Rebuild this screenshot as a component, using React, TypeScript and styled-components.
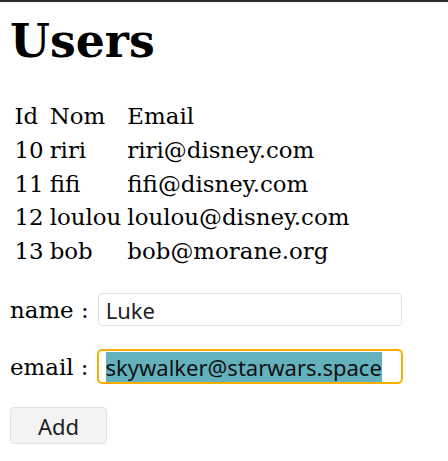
import React, { useEffect, useRef } from "react";
import styled, { createGlobalStyle } from "styled-components";

const Global = createGlobalStyle`
  html { border-top: 2px solid #2e2e2e; }
  body {
    margin: 0 10px;
    font-family: "DejaVu Serif", serif;
    font-size: 22.9px;
    color: #000;
    background: #fff;
  }
`;

const Title = styled.h1`
  font-size: 45.8px;
  font-weight: bold;
  margin: 12px 0 30px;
`;

const Table = styled.table`
  border-spacing: 3px;
  border-collapse: separate;
`;

const Th = styled.th`
  font-weight: normal;
  text-align: left;
  padding: 2.35px 1.5px;
`;

const Td = styled.td`
  padding: 2.35px 1.5px;
`;

const Form = styled.form`
  display: flex;
  flex-direction: column;
  align-items: flex-start;
  gap: 24px;
  margin-top: 24px;
`;

const Field = styled.label`
  display: flex;
  align-items: center;
  gap: 9px;
`;

const Input = styled.input`
  box-sizing: border-box;
  width: 304px;
  height: 33px;
  padding: 0 7px;
  border: 1px solid #e2e2e2;
  border-radius: 4px;
  font-family: "Noto Sans", sans-serif;
  font-size: 22px;
  color: #222;
  background: #fff;
  outline: none;
  &:focus {
    border-color: #f7ae00;
    box-shadow: 0 0 0 1px #f7ae00;
  }
  &::selection {
    background: #63b1bd;
    color: #111;
  }
`;

const Button = styled.button`
  box-sizing: border-box;
  width: 97px;
  height: 37px;
  border: 1px solid #e0e0e0;
  border-radius: 4px;
  background: #f4f4f4;
  font-family: "Noto Sans", sans-serif;
  font-size: 22px;
  color: #222;
`;

const users = [
  { id: 10, nom: "riri", email: "riri@disney.com" },
  { id: 11, nom: "fifi", email: "fifi@disney.com" },
  { id: 12, nom: "loulou", email: "loulou@disney.com" },
  { id: 13, nom: "bob", email: "bob@morane.org" },
];

export default function App() {
  const emailRef = useRef<HTMLInputElement>(null);
  useEffect(() => {
    const el = emailRef.current;
    if (el) {
      el.focus();
      el.select();
    }
  }, []);
  return (
    <>
      <Global />
      <Title>Users</Title>
      <Table>
        <thead>
          <tr>
            <Th>Id</Th>
            <Th>Nom</Th>
            <Th>Email</Th>
          </tr>
        </thead>
        <tbody>
          {users.map((u) => (
            <tr key={u.id}>
              <Td>{u.id}</Td>
              <Td>{u.nom}</Td>
              <Td>{u.email}</Td>
            </tr>
          ))}
        </tbody>
      </Table>
      <Form onSubmit={(e) => e.preventDefault()}>
        <Field>
          name :
          <Input defaultValue="Luke" />
        </Field>
        <Field>
          email :
          <Input ref={emailRef} defaultValue="skywalker@starwars.space" />
        </Field>
        <Button type="submit">Add</Button>
      </Form>
    </>
  );
}
